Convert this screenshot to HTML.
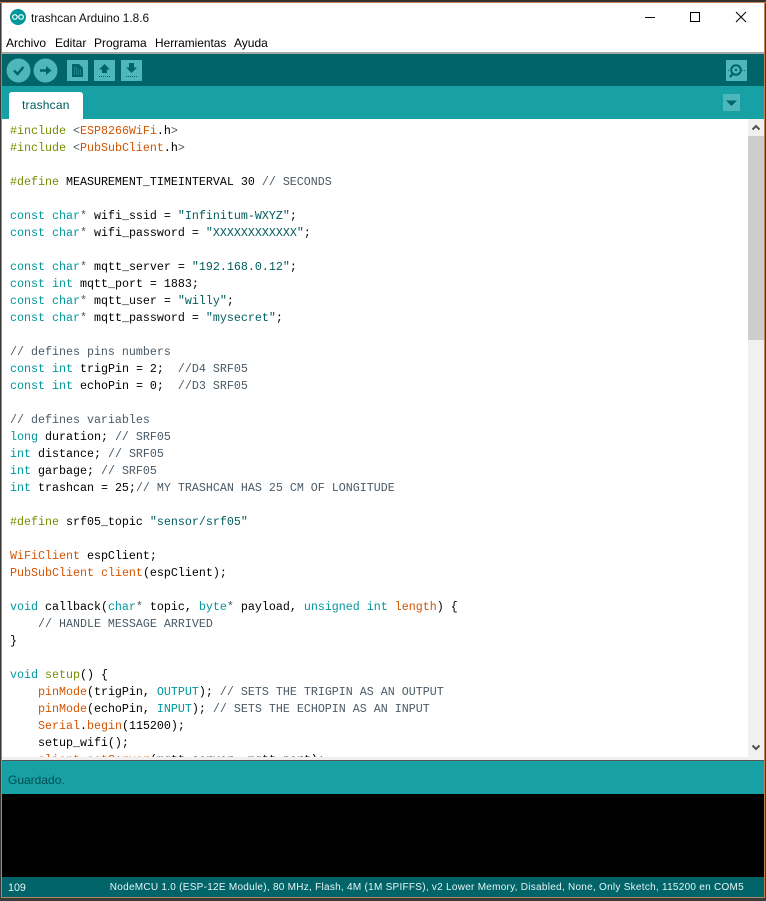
<!DOCTYPE html>
<html><head><meta charset="utf-8"><style>
html,body{margin:0;padding:0;width:766px;height:901px;overflow:hidden;background:#3a3a38}
div{position:absolute;box-sizing:border-box}
.sans{font-family:"Liberation Sans",sans-serif}
#code{left:10px;top:123px;width:736px;height:634px;overflow:hidden;font:11.67px/17px "Liberation Mono",monospace;color:#000;white-space:pre}
.k{color:#00979c}.p{color:#728e00}.o{color:#d35400}.c{color:#4a5a66}.s{color:#005c5f}
svg{position:absolute;display:block}
</style></head><body>
<div style="left:0;top:0;width:766px;height:3px;background:#33312c"></div>
<div style="left:0;top:2px;width:766px;height:1px;background:#c47f52"></div>
<div style="left:1px;top:3px;width:764px;height:895px;background:#fff;border-left:1px solid #b08468;border-right:1px solid #c47f52;border-bottom:1px solid #b08468"></div>

<svg style="left:10px;top:9px" width="16" height="16" viewBox="0 0 16 16"><circle cx="8" cy="8" r="8" fill="#00979c"/><circle cx="4.900" cy="8" r="2.300" fill="none" stroke="#fff" stroke-width="1.200"/><circle cx="11.100" cy="8" r="2.300" fill="none" stroke="#fff" stroke-width="1.200"/></svg>
<div class="sans" style="left:31px;top:10px;font-size:11.800px;line-height:16px;color:#111;white-space:nowrap">trashcan Arduino 1.8.6</div>
<svg style="left:645px;top:10px" width="110" height="18" viewBox="0 0 110 18" fill="none" stroke="#000" stroke-width="1"><path d="M0 7.500H10"/><rect x="45.500" y="2.500" width="9" height="9"/><path d="M91 2L101 12M101 2L91 12"/></svg>

<div class="sans" style="left:6px;top:35px;font-size:12px;line-height:16px;color:#000">Archivo</div>
<div class="sans" style="left:55px;top:35px;font-size:12px;line-height:16px;color:#000">Editar</div>
<div class="sans" style="left:94px;top:35px;font-size:12px;line-height:16px;color:#000">Programa</div>
<div class="sans" style="left:155px;top:35px;font-size:11.900px;line-height:16px;color:#000">Herramientas</div>
<div class="sans" style="left:234px;top:35px;font-size:12px;line-height:16px;color:#000">Ayuda</div>

<div style="left:2px;top:52px;width:762px;height:2px;background:#a9a9a9"></div>
<div style="left:2px;top:54px;width:762px;height:32px;background:#006468"></div>
<div style="left:2px;top:86px;width:762px;height:33px;background:#17a1a5"></div>

<svg style="left:6px;top:58px" width="138" height="25" viewBox="0 0 138 25">
<circle cx="12.500" cy="12.500" r="12" fill="#4db7bb"/><path d="M8 12.500L11.500 16L17.500 9" fill="none" stroke="#006468" stroke-width="2.400"/>
<circle cx="39.500" cy="12.500" r="12" fill="#4db7bb"/><path d="M34 11.200H40V8L45.500 12.500L40 17V13.800H34Z" fill="#006468"/>
<rect x="61" y="2" width="21" height="21" fill="#4db7bb"/><path d="M66 6H73L77 10V19H66Z" fill="#006468"/><path d="M68 10h3M68 12h7M68 14h7M68 16h7" stroke="#4db7bb" stroke-width=".8" stroke-dasharray="1 1"/>
<rect x="88" y="2" width="21" height="21" fill="#4db7bb"/><path d="M98.500 6L104 11.500H101V15H96V11.500H93Z" fill="#006468"/><path d="M93 18.500H104" stroke="#006468" stroke-dasharray="1 1"/>
<rect x="115" y="2" width="21" height="21" fill="#4db7bb"/><path d="M123 5H128V9.500H131L125.500 15L120 9.500H123Z" fill="#006468"/><path d="M120 18.500H131" stroke="#006468" stroke-dasharray="1 1"/>
</svg>
<svg style="left:726px;top:60px" width="21" height="21" viewBox="0 0 21 21"><rect width="21" height="21" fill="#4db7bb"/><circle cx="10" cy="10" r="4.800" fill="none" stroke="#006468" stroke-width="2"/><circle cx="10" cy="10" r="1.200" fill="#006468"/><path d="M6.500 14L4 17" stroke="#006468" stroke-width="2.200"/><path d="M2 10.500H4M16 10.500H20" stroke="#006468" stroke-dasharray="1 1"/></svg>

<div style="left:9px;top:92px;width:74px;height:27px;background:#fff;border-radius:3px 3px 0 0"></div>
<div class="sans" style="left:22px;top:97px;font-size:12px;line-height:16px;color:#005c5f;letter-spacing:.2px">trashcan</div>
<svg style="left:723px;top:94px" width="17" height="17" viewBox="0 0 17 17"><rect width="17" height="17" fill="#4db7bb"/><path d="M3 6.500H14L8.500 12Z" fill="#006468"/></svg>

<div style="left:2px;top:119px;width:762px;height:641px;background:#fff"></div>
<div id="code"><span class="p">#include</span> <span class="c">&lt;</span><span class="o">ESP8266WiFi</span>.h<span class="c">&gt;</span>
<span class="p">#include</span> <span class="c">&lt;</span><span class="o">PubSubClient</span>.h<span class="c">&gt;</span>

<span class="p">#define</span> MEASUREMENT_TIMEINTERVAL 30 <span class="c">// SECONDS</span>

<span class="k">const</span> <span class="k">char</span><span class="c">*</span> wifi_ssid = <span class="s">"Infinitum-WXYZ"</span>;
<span class="k">const</span> <span class="k">char</span><span class="c">*</span> wifi_password = <span class="s">"XXXXXXXXXXXX"</span>;

<span class="k">const</span> <span class="k">char</span><span class="c">*</span> mqtt_server = <span class="s">"192.168.0.12"</span>;
<span class="k">const</span> <span class="k">int</span> mqtt_port = 1883;
<span class="k">const</span> <span class="k">char</span><span class="c">*</span> mqtt_user = <span class="s">"willy"</span>;
<span class="k">const</span> <span class="k">char</span><span class="c">*</span> mqtt_password = <span class="s">"mysecret"</span>;

<span class="c">// defines pins numbers</span>
<span class="k">const</span> <span class="k">int</span> trigPin = 2;  <span class="c">//D4 SRF05</span>
<span class="k">const</span> <span class="k">int</span> echoPin = 0;  <span class="c">//D3 SRF05</span>

<span class="c">// defines variables</span>
<span class="k">long</span> duration; <span class="c">// SRF05</span>
<span class="k">int</span> distance; <span class="c">// SRF05</span>
<span class="k">int</span> garbage; <span class="c">// SRF05</span>
<span class="k">int</span> trashcan = 25;<span class="c">// MY TRASHCAN HAS 25 CM OF LONGITUDE</span>

<span class="p">#define</span> srf05_topic <span class="s">"sensor/srf05"</span>

<span class="o">WiFiClient</span> espClient;
<span class="o">PubSubClient</span> <span class="o">client</span>(espClient);

<span class="k">void</span> callback(<span class="k">char</span><span class="c">*</span> topic, <span class="k">byte</span><span class="c">*</span> payload, <span class="k">unsigned</span> <span class="k">int</span> <span class="o">length</span>) {
    <span class="c">// HANDLE MESSAGE ARRIVED</span>
}

<span class="k">void</span> <span class="p">setup</span>() {
    <span class="o">pinMode</span>(trigPin, <span class="k">OUTPUT</span>); <span class="c">// SETS THE TRIGPIN AS AN OUTPUT</span>
    <span class="o">pinMode</span>(echoPin, <span class="k">INPUT</span>); <span class="c">// SETS THE ECHOPIN AS AN INPUT</span>
    <span class="o">Serial</span>.<span class="o">begin</span>(115200);
    setup_wifi();
    <span class="o">client</span>.<span class="o">setServer</span>(mqtt_server, mqtt_port);</div>

<div style="left:748px;top:119px;width:16px;height:641px;background:#f0f0f0"></div>
<div style="left:748px;top:136px;width:16px;height:204px;background:#cdcdcd"></div>
<svg style="left:748px;top:119px" width="16" height="17" viewBox="0 0 16 17"><path d="M4.500 10.500L8 7L11.500 10.500" fill="none" stroke="#505050" stroke-width="2"/></svg>
<svg style="left:748px;top:739px" width="16" height="17" viewBox="0 0 16 17"><path d="M4.500 6.500L8 10L11.500 6.500" fill="none" stroke="#505050" stroke-width="2"/></svg>

<div style="left:2px;top:757px;width:746px;height:3px;background:#f0f0f0"></div>
<div style="left:2px;top:760px;width:762px;height:1px;background:#555"></div>
<div style="left:2px;top:761px;width:762px;height:33px;background:#17a1a5"></div>
<div class="sans" style="left:8px;top:772px;font-size:12px;line-height:16px;color:#004d50">Guardado.</div>
<div style="left:2px;top:794px;width:762px;height:83px;background:#000"></div>
<div style="left:2px;top:877px;width:762px;height:20px;background:#006468"></div>
<div class="sans" style="left:8px;top:881px;font-size:10.700px;line-height:14px;color:#e8f4f4">109</div>
<div class="sans" style="right:22px;top:881px;font-size:10px;line-height:14px;color:#e8f4f4;white-space:nowrap;letter-spacing:.27px">NodeMCU 1.0 (ESP-12E Module), 80 MHz, Flash, 4M (1M SPIFFS), v2 Lower Memory, Disabled, None, Only Sketch, 115200 en COM5</div>
</body></html>
